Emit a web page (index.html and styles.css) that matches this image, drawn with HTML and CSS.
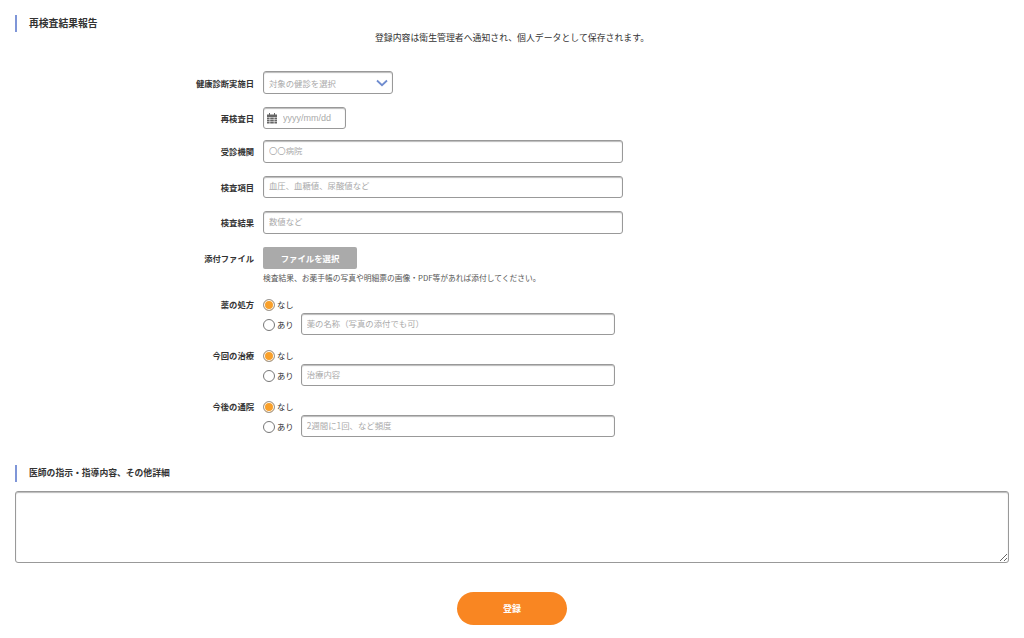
FILE: index.html
```html
<!DOCTYPE html>
<html lang="ja">
<head>
<meta charset="utf-8">
<title>再検査結果報告</title>
<link rel="stylesheet" href="styles.css">
</head>
<body>
<form class="page">
  <h2 class="section-head section-head-lg">再検査結果報告</h2>
  <p class="note">登録内容は衛生管理者へ通知され、個人データとして保存されます。</p>

  <div class="fields">
    <div class="row row-select">
      <span class="label">健康診断実施日</span>
      <div class="select-wrap">
        <select class="select"><option>対象の健診を選択</option></select>
        <svg class="chevron" width="12" height="8" viewBox="0 0 12 8"><path d="M1 1.5 6 6.2 11 1.5" fill="none" stroke="#6f8ccf" stroke-width="1.8"/></svg>
      </div>
    </div>
    <div class="row row-date">
      <span class="label">再検査日</span>
      <div class="date-box">
        <svg class="cal" width="10" height="11" viewBox="0 0 10 11"><path fill="#666" d="M2 0h1v1.5H2zM7 0h1v1.5H7zM0 1.5h10V4H0zM0 4.6h2.6v1.6H0zM3.2 4.6h3.6v1.6H3.2zM7.4 4.6H10v1.6H7.4zM0 6.8h2.6v1.6H0zM3.2 6.8h3.6v1.6H3.2zM7.4 6.8H10v1.6H7.4zM0 9h2.6v1.6H0zM3.2 9h3.6v1.6H3.2zM7.4 9H10v1.6H7.4z"/></svg>
        <input class="date-input" type="text" placeholder="yyyy/mm/dd">
      </div>
    </div>
    <div class="row">
      <span class="label">受診機関</span>
      <input class="input input-wide" type="text" placeholder="〇〇病院">
    </div>
    <div class="row">
      <span class="label">検査項目</span>
      <input class="input input-wide" type="text" placeholder="血圧、血糖値、尿酸値など">
    </div>
    <div class="row">
      <span class="label">検査結果</span>
      <input class="input input-wide" type="text" placeholder="数値など">
    </div>
    <div class="row row-file">
      <span class="label">添付ファイル</span>
      <div class="file-col">
        <button class="file-btn" type="button">ファイルを選択</button>
        <p class="help">検査結果、お薬手帳の写真や明細票の画像・PDF等があれば添付してください。</p>
      </div>
    </div>

    <div class="group">
      <span class="label label-group">薬の処方</span>
      <div class="choices">
        <label class="choice choice-none"><input class="radio" type="radio" name="a" checked><span>なし</span></label>
        <div class="choice-row">
          <label class="choice choice-some"><input class="radio" type="radio" name="a"><span>あり</span></label>
          <input class="input input-sub" type="text" placeholder="薬の名称（写真の添付でも可）">
        </div>
      </div>
    </div>
    <div class="group">
      <span class="label label-group">今回の治療</span>
      <div class="choices">
        <label class="choice choice-none"><input class="radio" type="radio" name="b" checked><span>なし</span></label>
        <div class="choice-row">
          <label class="choice choice-some"><input class="radio" type="radio" name="b"><span>あり</span></label>
          <input class="input input-sub" type="text" placeholder="治療内容">
        </div>
      </div>
    </div>
    <div class="group">
      <span class="label label-group">今後の通院</span>
      <div class="choices">
        <label class="choice choice-none"><input class="radio" type="radio" name="c" checked><span>なし</span></label>
        <div class="choice-row">
          <label class="choice choice-some"><input class="radio" type="radio" name="c"><span>あり</span></label>
          <input class="input input-sub" type="text" placeholder="2週間に1回、など頻度">
        </div>
      </div>
    </div>
  </div>

  <h2 class="section-head section-head-detail">医師の指示・指導内容、その他詳細</h2>
  <textarea class="details"></textarea>
  <div class="actions"><button class="submit" type="submit">登録</button></div>
</form>
</body>
</html>
```
FILE: styles.css
```css
* { box-sizing: border-box; }
html, body { margin: 0; padding: 0; background: #fff; overflow: hidden; }
body {
  font-family: "Noto Sans CJK JP", "Liberation Sans", sans-serif;
  color: #333;
  font-size: 9px;
}
.page { padding: 15px 15px 13px; display: flex; flex-direction: column; height: 638px; }

.section-head {
  margin: 0;
  height: 17px;
  border-left: 2px solid #7f96d8;
  padding-left: 12px;
  font-size: 8.8px;
  font-weight: 700;
  line-height: 16px;
  color: #333;
}
.section-head-lg { font-size: 9.8px; line-height: 16px; }
.section-head-detail { margin-top: 28px; }

.note {
  margin: 0;
  height: 12px;
  line-height: 12px;
  font-size: 8.9px;
  text-align: center;
}

.fields { margin-top: 27px; display: flex; flex-direction: column; }
.row { display: flex; align-items: center; gap: 9px; height: 22.5px; margin-bottom: 13px; }
.row-select { height: 23px; }
.row-date { height: 22px; margin-bottom: 11px; }
.row-file { align-items: flex-start; height: 37px; margin-top: 0.5px; margin-bottom: 13px; }
.row-file .label { line-height: 22px; }

.label {
  width: 239px;
  flex: none;
  text-align: right;
  font-size: 8.3px;
  font-weight: 700;
  color: #333;
}

.input, .select, .date-box {
  border: 1px solid #999;
  border-radius: 3px;
  box-shadow: inset 0 1px 1px #bbb;
  background: #fff;
  font-family: inherit;
  font-size: 8.4px;
  color: #333;
  outline: none;
}
.input { height: 22px; padding: 0 5px 3px; }
.input::placeholder, .date-input::placeholder { color: #aaa; opacity: 1; }
.input-wide { width: 360px; height: 22.5px; }
.input-sub { width: 314px; }

.select-wrap { position: relative; width: 130px; height: 23px; }
.select {
  appearance: none;
  width: 100%;
  height: 100%;
  padding: 0 5px;
  color: #aaa;
}
.chevron { position: absolute; right: 5px; top: 8px; pointer-events: none; }

.date-box { display: flex; align-items: center; width: 83px; height: 22px; padding-left: 3px; gap: 6px; }
.cal { flex: none; }
.date-input {
  border: 0;
  outline: 0;
  padding: 0;
  width: 60px;
  background: transparent;
  font-family: "Liberation Sans", sans-serif;
  font-size: 9px;
}

.file-col { display: flex; flex-direction: column; }
.file-btn {
  width: 94px;
  height: 22px;
  border: 0;
  border-radius: 2px;
  background: #aaa;
  color: #fff;
  font-family: inherit;
  font-size: 8.4px;
  font-weight: 700;
  padding: 0;
}
.help { margin: 3px 0 0; height: 12px; line-height: 12px; font-size: 7.75px; color: #555; white-space: nowrap; }

.group { display: flex; gap: 9px; height: 38px; margin-bottom: 13px; }
.group:last-child { margin-bottom: 0; }
.label-group { line-height: 14px; }
.choices { display: flex; flex-direction: column; }
.choice { display: flex; align-items: center; gap: 2px; font-size: 8.4px; color: #333; }
.choice span { position: relative; top: -1px; }
.choice-none { height: 16px; }
.choice-some { padding-top: 2px; }
.choice-row { display: flex; align-items: center; gap: 7px; height: 22px; }

.radio {
  appearance: none;
  width: 12px;
  height: 12px;
  margin: 0;
  border: 1px solid #777;
  border-radius: 50%;
  background: #fff;
  flex: none;
}
.radio:checked {
  border-color: #999;
  background: #f9a02a;
  box-shadow: inset 0 0 0 1px #fff;
}

.details {
  display: block;
  flex: none;
  width: 994px;
  height: 72px;
  margin-top: 9px;
  border: 1px solid #999;
  border-radius: 3px;
  box-shadow: inset 0 1px 1px #bbb;
  outline: none;
}

.actions { display: flex; justify-content: center; margin-top: 29px; }
.submit {
  width: 110px;
  height: 33px;
  border: 0;
  border-radius: 17px;
  background: #f98622;
  color: #fff;
  font-family: inherit;
  font-size: 9px;
  font-weight: 700;
  padding: 0;
}
```
